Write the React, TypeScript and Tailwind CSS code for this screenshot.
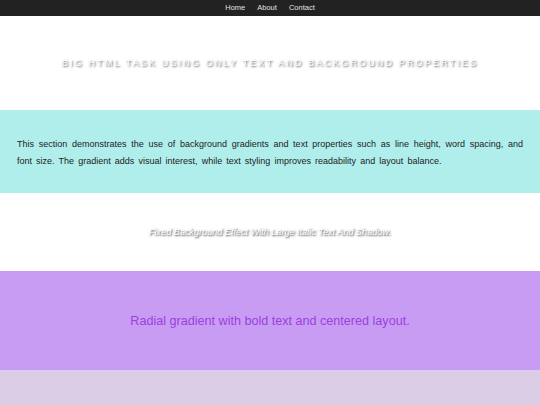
export default function App() {
  return (
    <div className="min-h-[405px] bg-white font-['Liberation_Sans',Arial,sans-serif]">
      <nav className="flex h-4 items-center justify-center gap-3 bg-[#222222] text-[7.5px] text-[#e0e0e0]">
        <a href="#">Home</a>
        <a href="#">About</a>
        <a href="#">Contact</a>
      </nav>

      <header className="flex h-[94px] items-center justify-center pt-[2px]">
        <h1 className="text-[9px] uppercase tracking-[2.15px] text-white [text-shadow:1px_1px_2px_#555]">
          Big HTML Task Using Only Text and Background Properties
        </h1>
      </header>

      <section className="flex h-[83px] items-center bg-[#b0eeec] px-[17px] pt-[2px]">
        <p className="text-justify text-[9px] leading-[17px] text-[#222] [word-spacing:1.6px]">
          This section demonstrates the use of background gradients and text properties such as line height,
          word spacing, and font size. The gradient adds visual interest, while text styling improves
          readability and layout balance.
        </p>
      </section>

      <section className="flex h-[78px] items-center justify-center pt-[2px]">
        <p className="text-[9.1px] italic text-white [text-shadow:1px_1px_2px_#333]">
          Fixed Background Effect With Large Italic Text And Shadow.
        </p>
      </section>

      <section className="flex h-[99px] items-center justify-center bg-[#c99cf4] pt-[2px]">
        <p className="text-[12.6px] text-[#9b3fe0]">Radial gradient with bold text and centered layout.</p>
      </section>

      <section className="h-[35px] bg-[#dccde6]" />
    </div>
  );
}
